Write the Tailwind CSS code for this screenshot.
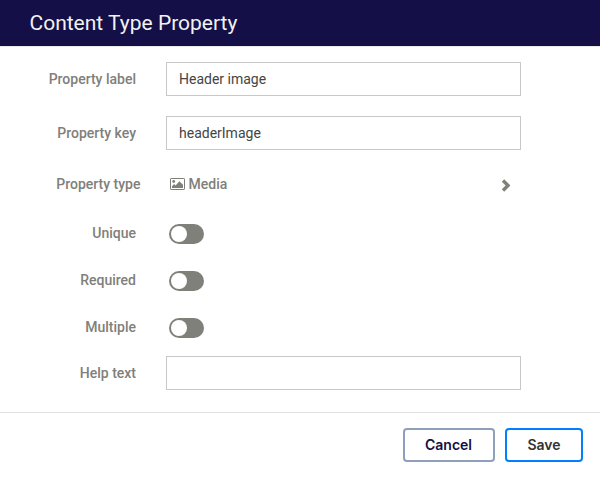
<!DOCTYPE html>
<html lang="en"><head><meta charset="utf-8"><title>Content Type Property</title>
<script src="https://cdn.jsdelivr.net/npm/@tailwindcss/browser@4"></script></head>
<body class="bg-white">
<div class="flex h-[477px] w-[600px] flex-col overflow-hidden bg-white font-[Roboto,sans-serif] text-sm text-[#80807b]">
<header class="flex h-[46px] shrink-0 items-center bg-[#140f46] pl-[29.5px] text-[21px] text-[#f2f2f2]">Content Type Property</header>
<main class="flex h-[366px] shrink-0 flex-col border-t border-[#e9e9e6] pt-[15px] font-medium">
<div class="mb-5 flex h-[34px] items-center"><label class="w-[136px] text-right">Property label</label><div class="ml-[30px] flex h-[34px] w-[355px] items-center border border-[#c8c8c8] px-3 font-normal text-[#444]">Header image</div></div>
<div class="mb-5 flex h-[34px] items-center"><label class="w-[136px] text-right">Property key</label><div class="ml-[30px] flex h-[34px] w-[355px] items-center border border-[#c8c8c8] px-3 font-normal text-[#444]">headerImage</div></div>
<div class="flex h-7 items-center"><span class="w-[140.5px] text-right">Property type</span>
<svg class="ml-[29.5px] mr-[3.5px] h-[12px] w-[15px]" viewBox="0 0 15 12" fill="currentColor"><rect x=".5" y=".5" width="14" height="11" rx=".6" fill="none" stroke="currentColor"/><circle cx="3.7" cy="3.5" r="1.4"/><path d="M2 10V8.3l2.2-2.2 1.4 1.3L9.4 3.2 13 6.7V10z"/></svg><span>Media</span>
<svg class="relative top-px ml-[274px] h-[13px] w-[11px]" viewBox="0 0 11 13" fill="none" stroke="currentColor" stroke-width="3.4"><path d="M2 1.5l5 5-5 5"/></svg></div>
<div class="mt-[26px] flex h-5 items-center"><label class="-mt-0.5 w-[136px] text-right">Unique</label><div class="ml-[33px] flex h-5 w-[35px] items-center rounded-full bg-[#80807b] pl-0.5"><span class="size-4 rounded-full bg-white"></span></div></div>
<div class="mt-[27px] flex h-5 items-center"><label class="-mt-0.5 w-[136px] text-right">Required</label><div class="ml-[33px] flex h-5 w-[35px] items-center rounded-full bg-[#80807b] pl-0.5"><span class="size-4 rounded-full bg-white"></span></div></div>
<div class="mt-[27px] flex h-5 items-center"><label class="-mt-0.5 w-[136px] text-right">Multiple</label><div class="ml-[33px] flex h-5 w-[35px] items-center rounded-full bg-[#80807b] pl-0.5"><span class="size-4 rounded-full bg-white"></span></div></div>
<div class="mt-[18px] flex h-[34px] items-center"><label class="w-[136px] text-right">Help text</label><div class="ml-[30px] h-[34px] w-[355px] border border-[#c8c8c8]"></div></div>
</main>
<footer class="flex grow items-start justify-end gap-[10px] border-t border-[#e0e0e0] pr-[17px] pt-[15px] font-[Inter,sans-serif] font-semibold text-[#140f46]">
<button class="h-[34px] w-[92px] rounded-[4px] border-2 border-[#8ea0bb] pr-px">Cancel</button><button class="h-[34px] w-[78px] rounded-[4px] border-2 border-[#0080ff] text-[#333]">Save</button>
</footer></div></body></html>
